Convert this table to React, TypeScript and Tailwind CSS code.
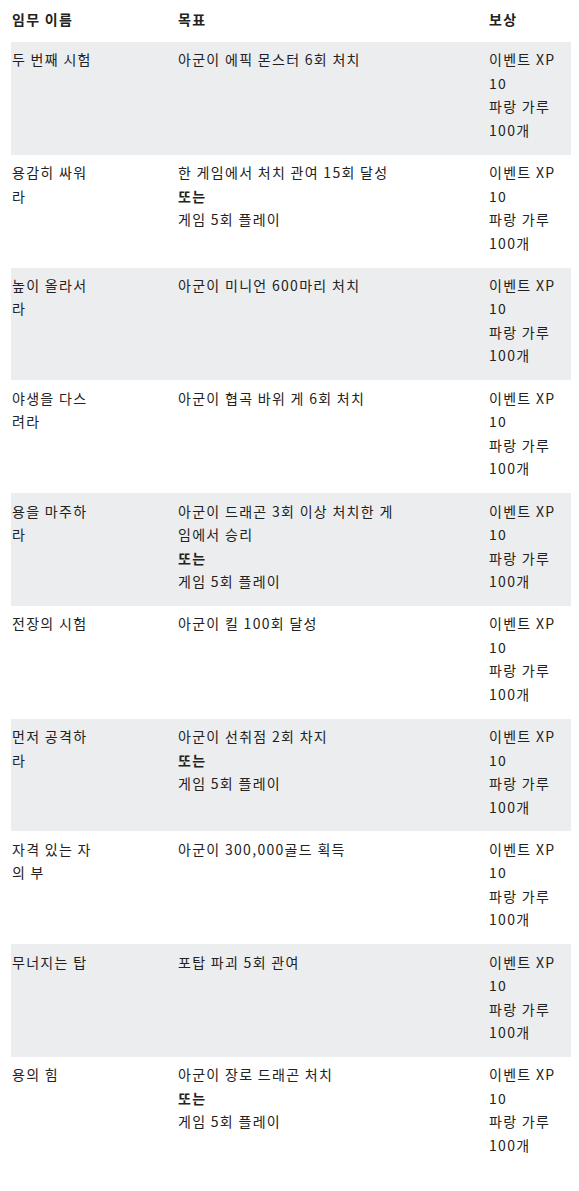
const REWARD = ["이벤트 XP", "10", "파랑 가루", "100개"]

type Line = { text: string; bold?: boolean }

const ROWS: { name: string[]; goal: Line[] }[] = [
  { name: ["두 번째 시험"], goal: [{ text: "아군이 에픽 몬스터 6회 처치" }] },
  {
    name: ["용감히 싸워", "라"],
    goal: [
      { text: "한 게임에서 처치 관여 15회 달성" },
      { text: "또는", bold: true },
      { text: "게임 5회 플레이" },
    ],
  },
  { name: ["높이 올라서", "라"], goal: [{ text: "아군이 미니언 600마리 처치" }] },
  { name: ["야생을 다스", "려라"], goal: [{ text: "아군이 협곡 바위 게 6회 처치" }] },
  {
    name: ["용을 마주하", "라"],
    goal: [
      { text: "아군이 드래곤 3회 이상 처치한 게" },
      { text: "임에서 승리" },
      { text: "또는", bold: true },
      { text: "게임 5회 플레이" },
    ],
  },
  { name: ["전장의 시험"], goal: [{ text: "아군이 킬 100회 달성" }] },
  {
    name: ["먼저 공격하", "라"],
    goal: [
      { text: "아군이 선취점 2회 차지" },
      { text: "또는", bold: true },
      { text: "게임 5회 플레이" },
    ],
  },
  { name: ["자격 있는 자", "의 부"], goal: [{ text: "아군이 300,000골드 획득" }] },
  { name: ["무너지는 탑"], goal: [{ text: "포탑 파괴 5회 관여" }] },
  {
    name: ["용의 힘"],
    goal: [
      { text: "아군이 장로 드래곤 처치" },
      { text: "또는", bold: true },
      { text: "게임 5회 플레이" },
    ],
  },
]

export default function App() {
  return (
    <div
      className="min-h-[1191px] bg-white pl-[11px] pr-[8px] text-[14px] leading-[23.5px] tracking-[1.3px] text-[#222]"
      style={{ fontFamily: '"Noto Sans CJK KR", "Noto Sans", sans-serif' }}
    >
      <div className="grid grid-cols-[166px_311px_83px] font-bold">
        <div className="pl-px pt-[7.5px] pb-[11px]">임무 이름</div>
        <div className="pl-px pt-[7.5px] pb-[11px]">목표</div>
        <div className="pl-px pt-[7.5px] pb-[11px]">보상</div>
      </div>
      {ROWS.map((row, i) => (
        <div
          key={row.name.join("")}
          className={
            "grid grid-cols-[166px_311px_83px] " + (i % 2 === 0 ? "bg-[#ecedef]" : "bg-white")
          }
        >
          <div className="whitespace-nowrap pl-px pt-[6.4px] pb-[12.4px]">
            {row.name.map((n) => (
              <div key={n}>{n}</div>
            ))}
          </div>
          <div className="whitespace-nowrap pl-px pt-[6.4px] pb-[12.4px]">
            {row.goal.map((g) => (
              <div key={g.text} className={g.bold ? "font-bold" : ""}>
                {g.text}
              </div>
            ))}
          </div>
          <div className="whitespace-nowrap pl-px pt-[6.4px] pb-[12.4px]">
            {REWARD.map((r) => (
              <div key={r}>{r}</div>
            ))}
          </div>
        </div>
      ))}
    </div>
  )
}
